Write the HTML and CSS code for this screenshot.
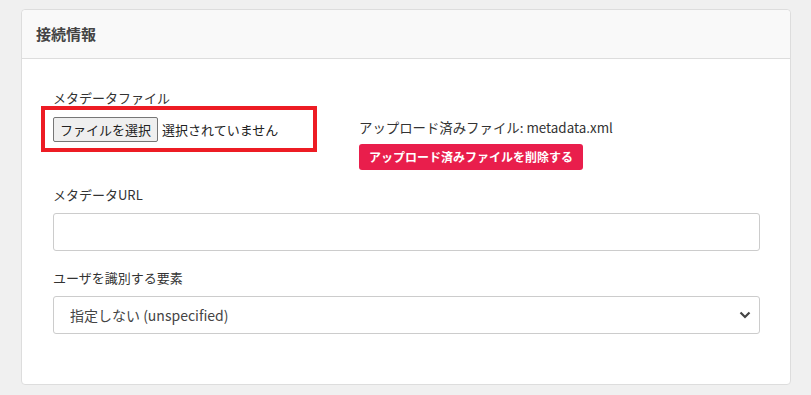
FILE: index.html
```html
<!DOCTYPE html>
<html>
<head>
    <title>接続情報</title>
    <link rel="stylesheet" href="styles.css">
</head>
<body>
    <div class="card">
        <div class="card-header">接続情報</div>
        <div class="card-body">
            <div class="file-row">
                <div class="file-col">
                    <label class="label">メタデータファイル</label>
                    <div class="file-input">
                        <button type="button" class="file-btn">ファイルを選択</button>
                        <span class="file-name">選択されていません</span>
                        <span class="highlight"></span>
                    </div>
                </div>
                <div class="uploaded-col">
                    <div class="uploaded">アップロード済みファイル: metadata.xml</div>
                    <button type="button" class="btn-danger">アップロード済みファイルを削除する</button>
                </div>
            </div>

            <label class="label" for="metadataUrl">メタデータURL</label>
            <input type="text" id="metadataUrl" class="text-input">

            <label class="label" for="userKey">ユーザを識別する要素</label>
            <div class="select-wrap">
                <select id="userKey" class="select">
                    <option>指定しない (unspecified)</option>
                </select>
                <svg class="chevron" width="12" height="8" viewBox="0 0 12 8">
                    <path d="M1.5 1.5 L6 6 L10.5 1.5" fill="none" stroke="#444" stroke-width="2.2"/>
                </svg>
            </div>
        </div>
    </div>
</body>
</html>
```

FILE: styles.css
```css
body {
    margin: 0;
    padding: 9px 20px 0 21px;
    background-color: #f0f0f0;
    font-family: "Noto Sans CJK JP", "Noto Sans", sans-serif;
    color: #333;
}

.card {
    background-color: #fff;
    border: 1px solid #ddd;
    border-radius: 4px;
}

.card-header {
    height: 48px;
    line-height: 48px;
    padding-left: 14px;
    background-color: #f9f9f9;
    border-bottom: 1px solid #ddd;
    border-radius: 4px 4px 0 0;
    font-size: 15px;
    font-weight: bold;
    color: #444;
}

.card-body {
    padding: 28px 30px 50px 31px;
}

.label {
    display: block;
    font-size: 13px;
    line-height: 21px;
    margin-bottom: 8px;
}

.file-row {
    display: grid;
    grid-template-columns: 306px 1fr;
    margin-bottom: 14px;
}

.file-input {
    position: relative;
    display: flex;
    align-items: center;
    gap: 4px;
    height: 26px;
}

.file-btn {
    font-family: "Noto Sans CJK JP", sans-serif;
    font-size: 13px;
    height: 25px;
    padding: 0 6px;
    color: #222;
    background-color: #efefef;
    border: 1px solid #767676;
    border-radius: 2px;
}

.file-name {
    font-size: 13px;
    color: #222;
}

.highlight {
    position: absolute;
    left: -12px;
    top: -10px;
    width: 268px;
    height: 38px;
    border: 4px solid #ed1c24;
}

.uploaded-col {
    padding-top: 30px;
}

.uploaded {
    font-size: 13.4px;
    line-height: 20px;
    margin-bottom: 6px;
}

.btn-danger {
    height: 26px;
    padding: 0 10px;
    font-family: "Noto Sans CJK JP", sans-serif;
    font-size: 12px;
    font-weight: bold;
    color: #fff;
    background-color: #e91e4c;
    border: none;
    border-radius: 3px;
}

.text-input {
    display: block;
    box-sizing: border-box;
    width: 100%;
    height: 38px;
    margin: 0 0 16px 0;
    border: 1px solid #ccc;
    border-radius: 3px;
}

.select-wrap {
    position: relative;
}

.select {
    display: block;
    box-sizing: border-box;
    width: 100%;
    height: 38px;
    padding: 0 16px;
    appearance: none;
    background-color: #fff;
    border: 1px solid #ccc;
    border-radius: 3px;
    font-family: "Noto Sans CJK JP", sans-serif;
    font-size: 14px;
    color: #444;
}

.chevron {
    position: absolute;
    right: 9px;
    top: 15px;
}
```
